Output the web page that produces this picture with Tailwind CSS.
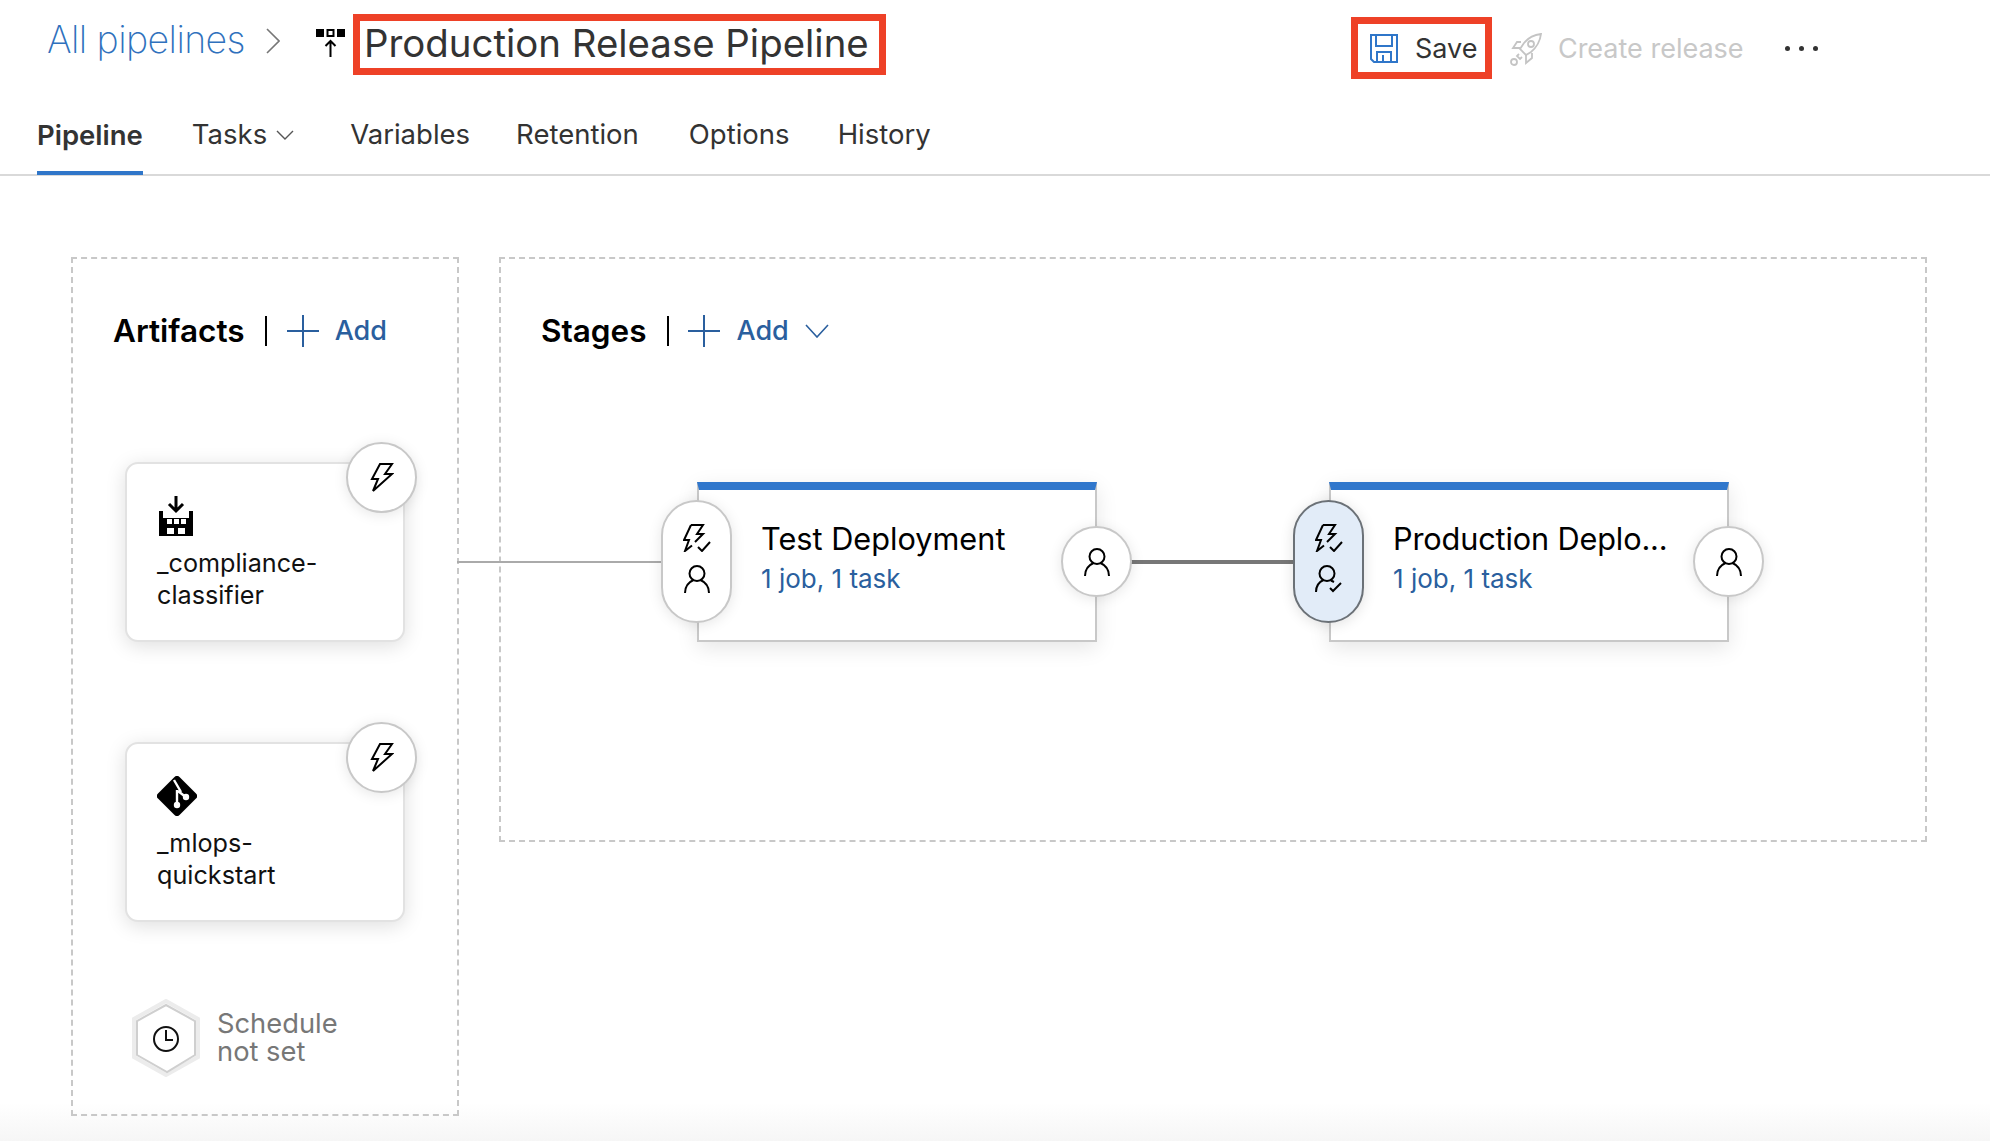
<!DOCTYPE html>
<html lang="en">
<head>
    <meta charset="UTF-8">
    <title>Production Release Pipeline</title>
    <script src="https://cdn.jsdelivr.net/npm/@tailwindcss/browser@4"></script>
</head>
<body class="[font-family:Inter,sans-serif] bg-white text-black">
<div class="h-screen flex flex-col overflow-hidden">
    <!-- header -->
    <header class="h-[88px] flex items-center shrink-0 pl-[47px]">
        <a class="text-[37.5px] font-extralight tracking-[-0.6px] text-[#2f71bd] -mt-[8px]">All pipelines</a>
        <svg class="ml-[21px] -mt-[6px]" width="14" height="28" viewBox="0 0 14 28" fill="none" stroke="#777" stroke-width="1.6"><path d="M1 2l12 12L1 26"/></svg>
        <svg class="ml-[36px] -mt-[2px]" width="30" height="28" viewBox="0 0 30 28"><rect x="0" y="0" width="8" height="8"/><rect x="11.5" y="1" width="6" height="6" fill="none" stroke="#000" stroke-width="2"/><rect x="21" y="0" width="8" height="8"/><path d="M14.5 28V13M9.5 17l5-5 5 5" fill="none" stroke="#000" stroke-width="2"/></svg>
        <h1 class="ml-[7px] h-[61px] w-[533px] border-[7px] border-[#ee4127] flex items-center pl-[4px] text-[38.4px] text-[#333] whitespace-nowrap">Production Release Pipeline</h1>
        <button class="ml-[465px] mt-[8px] h-[62px] w-[141px] border-[7px] border-[#ee4127] flex items-center pl-[12px] pt-[2px] text-[27px] text-[#333]">
            <svg class="shrink-0 -mt-[2px]" width="28" height="29" viewBox="0 0 28 29" fill="none" stroke="#2f76c9" stroke-width="2"><path d="M1 1h26v27H4l-3-3z"/><path d="M6 1v11h16V1M7 28V18h14v10M13 21v7"/></svg>
            <span class="ml-[17px]">Save</span>
        </button>
        <button class="ml-[18px] mt-[10px] flex items-center text-[27px] text-[#c8c8c8]">
            <svg width="32" height="33" viewBox="0 0 32 33" fill="none" stroke="#c4c4c4" stroke-width="1.8"><path d="M31 1c-8 1-13 4-17 9l-4 6 6 6 5-3c6-5 9-10 10-18z"/><circle cx="21" cy="11" r="3"/><path d="M11 9H7l-4 6h7M22 20v5l-6 5v-8M9 21l-2 2 3 3 2-2"/><circle cx="4" cy="29" r="3"/></svg>
            <span class="ml-[16px]">Create release</span>
        </button>
        <div class="ml-[41px] mt-[8px] flex gap-[9px]">
            <span class="size-[5px] rounded-full bg-[#333]"></span>
            <span class="size-[5px] rounded-full bg-[#333]"></span>
            <span class="size-[5px] rounded-full bg-[#333]"></span>
        </div>
    </header>

    <!-- tabs -->
    <nav class="h-[88px] shrink-0 border-b-2 border-[#d9d9d9] flex pl-[37px] gap-[48px] text-[27.5px] text-[#333]">
        <a class="flex items-center pt-[12px] font-semibold border-b-4 border-[#2f76c9] -mb-[1px]">Pipeline</a>
        <a class="flex items-center ml-[1px] pt-[8px] gap-[9px] pr-[8px]">
            Tasks
            <svg width="18" height="10" viewBox="0 0 18 10" fill="none" stroke="#555" stroke-width="1.4"><path d="M1 1l8 8 8-8"/></svg>
        </a>
        <a class="flex items-center pt-[8px]">Variables</a>
        <a class="flex items-center -ml-[2px] pt-[8px]">Retention</a>
        <a class="flex items-center ml-[2px] pt-[8px]">Options</a>
        <a class="flex items-center pt-[8px]">History</a>
    </nav>

    <!-- canvas -->
    <main class="flex-1 flex items-start gap-[40px] pl-[71px] pt-[81px] bg-linear-to-b from-white from-[96%] to-[#f6f6f6]">
        <!-- artifacts -->
        <section class="w-[388px] h-[859px] border-2 border-dashed border-[#c8c8c8] pl-[40px] pt-[57px] shrink-0">
            <div class="flex items-center h-[30px]">
                <h2 class="text-[31.5px] font-semibold">Artifacts</h2>
                <span class="ml-[20px] w-[2px] h-[30px] bg-black"></span>
                <svg class="ml-[20px]" width="32" height="32" viewBox="0 0 32 32" stroke="#2a5f9e" stroke-width="2"><path d="M16 0v32M0 16h32"/></svg>
                <span class="ml-[16px] text-[27px] font-medium text-[#2a5f9e]">Add</span>
            </div>

            <div class="relative mt-[116px] ml-[12px] w-[280px] h-[180px] rounded-[13px] bg-white border-2 border-[#e2e2e2] shadow-[0_4px_20px_rgba(0,0,0,0.13)] pl-[31px] pt-[32px]">
                <svg width="36" height="40" viewBox="0 0 36 40"><path d="M18 0v14M11 8l7 7 7-7" fill="none" stroke="#000" stroke-width="3"/><path fill-rule="evenodd" d="M1 15h4v7h26v-7h4v25H1zM9 23h5v5H9zM16 23h5v5h-5zM23 23h5v5h-5zM9 32h7v6H9zM20 32h7v6h-7z"/></svg>
                <p class="mt-[11px] -ml-[1px] text-[25.2px] leading-[32px] text-[#111]">_compliance-<br>classifier</p>
                <div class="absolute -top-[22px] -right-[14px] size-[71px] rounded-full bg-white border-2 border-[#c8c8c8] shadow-[0_2px_14px_rgba(0,0,0,0.1)] flex items-center justify-center">
                    <svg width="24" height="30" viewBox="0 0 24 30" fill="none" stroke="#000" stroke-width="2"><path d="M10 1h12l-7 10h7L3 28l5-12H2z"/></svg>
                </div>
            </div>

            <div class="relative mt-[100px] ml-[12px] w-[280px] h-[180px] rounded-[13px] bg-white border-2 border-[#e2e2e2] shadow-[0_4px_20px_rgba(0,0,0,0.13)] pl-[30px] pt-[32px]">
                <svg width="40" height="40" viewBox="0 0 40 40"><path d="M17.5 1L1 17.5a3.5 3.5 0 0 0 0 5L17.5 39a3.5 3.5 0 0 0 5 0L39 22.5a3.5 3.5 0 0 0 0-5L22.5 1a3.5 3.5 0 0 0-5 0z"/><path d="M17 4l7 12M20 14v14M21 15l9 7" fill="none" stroke="#fff" stroke-width="2.4"/><circle cx="20" cy="29" r="3.2" fill="#fff"/><circle cx="29" cy="21" r="3.2" fill="#fff"/></svg>
                <p class="mt-[11px] text-[25.2px] leading-[32px] text-[#111]">_mlops-<br>quickstart</p>
                <div class="absolute -top-[22px] -right-[14px] size-[71px] rounded-full bg-white border-2 border-[#c8c8c8] shadow-[0_2px_14px_rgba(0,0,0,0.1)] flex items-center justify-center">
                    <svg width="24" height="30" viewBox="0 0 24 30" fill="none" stroke="#000" stroke-width="2"><path d="M10 1h12l-7 10h7L3 28l5-12H2z"/></svg>
                </div>
            </div>

            <div class="mt-[77px] ml-[19px] flex items-center gap-[17px]">
                <svg width="68" height="78" viewBox="0 0 68 78" fill="none"><path d="M34 2l32 18v38L34 76 2 58V20z" stroke="#ececec" stroke-width="4"/><path d="M34 6l29 16v34L35 73 5 56V22z" stroke="#cfcfcf" stroke-width="2"/><circle cx="34" cy="40" r="12" stroke="#111" stroke-width="2"/><path d="M34 31v10h7" stroke="#111" stroke-width="2"/></svg>
                <p class="text-[27.3px] leading-[28px] text-[#777]">Schedule<br>not set</p>
            </div>
        </section>

        <!-- stages -->
        <section class="w-[1428px] h-[585px] border-2 border-dashed border-[#c8c8c8] pl-[40px] pt-[57px] shrink-0">
            <div class="flex items-center h-[30px]">
                <h2 class="text-[31.5px] font-semibold">Stages</h2>
                <span class="ml-[21px] w-[2px] h-[30px] bg-black"></span>
                <svg class="ml-[19px]" width="32" height="32" viewBox="0 0 32 32" stroke="#2a5f9e" stroke-width="2"><path d="M16 0v32M0 16h32"/></svg>
                <span class="ml-[16px] text-[27px] font-medium text-[#2a5f9e]">Add</span>
                <svg class="ml-[16px]" width="24" height="14" viewBox="0 0 24 14" fill="none" stroke="#2a5f9e" stroke-width="1.6"><path d="M1 1l11 12L23 1"/></svg>
            </div>

            <div class="flex gap-[232px] mt-[136px] ml-[156px]">
                <!-- test deployment -->
                <div class="relative w-[400px] h-[160px] bg-white border-x-2 border-b-2 border-[#c8c8c8] border-t-[8px] border-t-[#3077cc] shadow-[0_6px_20px_rgba(0,0,0,0.1)] pl-[62px] pt-[30px]">
                    <span class="absolute top-[71px] right-full w-[242px] h-[2px] bg-[#aaa]"></span>
                    <p class="text-[30.7px] leading-[38px] whitespace-nowrap">Test Deployment</p>
                    <p class="text-[26px] leading-[38px] mt-[2px] text-[#2a5f9e]">1 job, 1 task</p>
                    <div class="absolute top-[10px] -left-[38px] w-[71px] h-[123px] rounded-full bg-white border-2 border-[#c8c8c8] shadow-[0_2px_14px_rgba(0,0,0,0.1)] flex flex-col items-center pt-[22px] gap-[13px]">
                        <svg width="28" height="28" viewBox="0 0 28 28" fill="none" stroke="#000" stroke-width="2"><path d="M8 1h12l-6 9h6l-8 8M9 21.500L2 27l4-11H1L8 1M15 23l4 4 8-9"/></svg>
                        <svg width="26" height="28" viewBox="0 0 26 28" fill="none" stroke="#000" stroke-width="2"><circle cx="13" cy="8.500" r="7.500"/><path d="M1 28c0-7 4-11 8.500-13M25 28c0-7-4-11-8.500-13"/></svg>
                    </div>
                    <span class="absolute top-[70px] left-full w-[232px] h-[4px] bg-[#777]"></span>
                    <div class="absolute top-[36px] -right-[37px] size-[71px] rounded-full bg-white border-2 border-[#c8c8c8] shadow-[0_2px_14px_rgba(0,0,0,0.1)] flex items-center justify-center">
                        <svg width="26" height="28" viewBox="0 0 26 28" fill="none" stroke="#000" stroke-width="2"><circle cx="13" cy="8.500" r="7.500"/><path d="M1 28c0-7 4-11 8.500-13M25 28c0-7-4-11-8.500-13"/></svg>
                    </div>
                </div>

                <!-- production deployment -->
                <div class="relative w-[400px] h-[160px] bg-white border-x-2 border-b-2 border-[#c8c8c8] border-t-[8px] border-t-[#3077cc] shadow-[0_6px_20px_rgba(0,0,0,0.1)] pl-[62px] pt-[30px]">
                    <p class="text-[30.7px] tracking-[-0.15px] leading-[38px] whitespace-nowrap">Production Deplo...</p>
                    <p class="text-[26px] leading-[38px] mt-[2px] text-[#2a5f9e]">1 job, 1 task</p>
                    <div class="absolute top-[10px] -left-[38px] w-[71px] h-[123px] rounded-full bg-[#e2ecf8] border-2 border-[#6b7177] shadow-[0_2px_14px_rgba(0,0,0,0.12)] flex flex-col items-center pt-[22px] gap-[13px]">
                        <svg width="28" height="28" viewBox="0 0 28 28" fill="none" stroke="#000" stroke-width="2"><path d="M8 1h12l-6 9h6l-8 8M9 21.500L2 27l4-11H1L8 1M15 23l4 4 8-9"/></svg>
                        <svg width="28" height="28" viewBox="0 0 28 28" fill="none" stroke="#000" stroke-width="2"><circle cx="12" cy="8.500" r="7.500"/><path d="M1 27c0-6 3-10 7.500-12M16 15.500l3 1.500M15 23l3 3 8-8"/></svg>
                    </div>
                    <div class="absolute top-[36px] -right-[37px] size-[71px] rounded-full bg-white border-2 border-[#c8c8c8] shadow-[0_2px_14px_rgba(0,0,0,0.1)] flex items-center justify-center">
                        <svg width="26" height="28" viewBox="0 0 26 28" fill="none" stroke="#000" stroke-width="2"><circle cx="13" cy="8.500" r="7.500"/><path d="M1 28c0-7 4-11 8.500-13M25 28c0-7-4-11-8.500-13"/></svg>
                    </div>
                </div>
            </div>
        </section>
    </main>
</div>
</body>
</html>
